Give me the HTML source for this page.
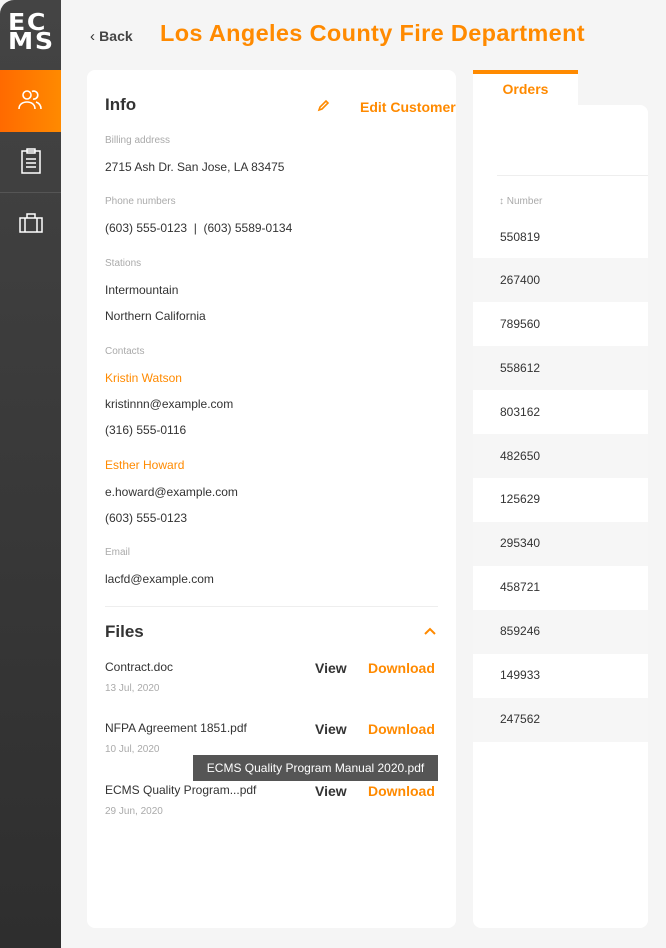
<!DOCTYPE html>
<html><head><style>
*{margin:0;padding:0;box-sizing:border-box}
body{width:666px;height:948px;background:#f5f5f5;font-family:"Liberation Sans",sans-serif;position:relative;overflow:hidden;color:#333}
.a{position:absolute;white-space:nowrap}
.sb{left:0;top:0;width:61px;height:948px;background:linear-gradient(#444,#2e2e2e);border-top-left-radius:14px}
.lab{font-size:10px;color:#aaa;left:105px}
.val{font-size:12px;color:#333;left:105px}
.or{color:#ff8a00}
.row{left:473px;width:175px;height:44px;background:#f6f6f6}
.num{left:500px;font-size:12px;color:#333}
</style></head><body>
<div class="a sb"></div>
<div class="a" style="left:8px;top:14px;color:#fff;font-weight:bold;font-size:23px;line-height:19px;letter-spacing:1.5px;font-family:'DejaVu Sans',sans-serif;transform:scaleX(1.1);transform-origin:left">EC<br>MS</div>
<div class="a" style="left:0;top:70px;width:61px;height:62px;background:linear-gradient(90deg,#ff6a00,#ff8a00)"></div>
<svg class="a" style="left:18px;top:89px" width="25" height="22" viewBox="0 0 25 22" fill="none" stroke="#fff" stroke-width="1.6"><circle cx="9" cy="6" r="4"/><path d="M1 20c0-5 4-7 8-7s8 2 8 7"/><path d="M14 2.5a4 4 0 1 1 1 7.5M18 13c3 1 5 3 5 7"/></svg>
<div class="a" style="left:0;top:192px;width:61px;height:1px;background:#555"></div>
<svg class="a" style="left:21px;top:148px" width="20" height="26" viewBox="0 0 20 26" fill="none" stroke="#fff" stroke-width="1.5"><rect x="1" y="3" width="18" height="22"/><rect x="6" y="1" width="8" height="4"/><path d="M5 11h10M5 15h10M5 19h10"/></svg>
<svg class="a" style="left:19px;top:213px" width="24" height="20" viewBox="0 0 24 20" fill="none" stroke="#fff" stroke-width="1.5"><rect x="1" y="5" width="22" height="14"/><path d="M8 5V1h8v4M6 5v14M18 5v14"/></svg>
<div class="a" style="left:90px;top:28px;font-size:15px;color:#333">&#8249; <span style="font-size:14px;font-weight:bold;color:#444">Back</span></div>
<div class="a or" style="left:160px;top:20px;font-size:23.5px;font-weight:bold;letter-spacing:0.35px">Los Angeles County Fire Department</div>
<div class="a" style="left:87px;top:70px;width:369px;height:858px;background:#fff;border-radius:8px"></div>
<div class="a" style="left:105px;top:95px;font-size:17px;font-weight:bold;color:#333">Info</div>
<svg class="a" style="left:317px;top:99px" width="13" height="13" viewBox="0 0 13 13" fill="none" stroke="#ff8a00" stroke-width="1.6"><path d="M2 11l1-3 6-6 2 2-6 6z"/></svg>
<div class="a or" style="left:360px;top:99px;font-size:14px;font-weight:bold;width:98px;overflow:hidden">Edit Customer</div>
<div class="a lab" style="top:135px">Billing address</div>
<div class="a val" style="top:160px">2715 Ash Dr. San Jose, LA 83475</div>
<div class="a lab" style="top:196px">Phone numbers</div>
<div class="a val" style="top:221px">(603) 555-0123 &nbsp;|&nbsp; (603) 5589-0134</div>
<div class="a lab" style="top:258px">Stations</div>
<div class="a val" style="top:283px">Intermountain</div>
<div class="a val" style="top:309px">Northern California</div>
<div class="a lab" style="top:346px">Contacts</div>
<div class="a val or" style="top:371px">Kristin Watson</div>
<div class="a val" style="top:397px">kristinnn@example.com</div>
<div class="a val" style="top:423px">(316) 555-0116</div>
<div class="a val or" style="top:458px">Esther Howard</div>
<div class="a val" style="top:485px">e.howard@example.com</div>
<div class="a val" style="top:511px">(603) 555-0123</div>
<div class="a lab" style="top:547px">Email</div>
<div class="a val" style="top:572px">lacfd@example.com</div>
<div class="a" style="left:105px;top:606px;width:333px;height:1px;background:#eee"></div>
<div class="a" style="left:105px;top:622px;font-size:17px;font-weight:bold;color:#333">Files</div>
<svg class="a" style="left:424px;top:627px" width="12" height="8" viewBox="0 0 12 8" fill="none" stroke="#ff8a00" stroke-width="2"><path d="M1 7l5-5 5 5"/></svg>
<div class="a val" style="top:660px">Contract.doc</div>
<div class="a lab" style="top:683px">13 Jul, 2020</div>
<div class="a val" style="top:721px">NFPA Agreement 1851.pdf</div>
<div class="a lab" style="top:744px">10 Jul, 2020</div>
<div class="a val" style="top:783px">ECMS Quality Program...pdf</div>
<div class="a lab" style="top:806px">29 Jun, 2020</div>
<div class="a" style="left:315px;top:660px;font-size:14px;font-weight:bold;color:#333">View</div>
<div class="a or" style="left:368px;top:660px;font-size:14px;font-weight:bold">Download</div>
<div class="a" style="left:315px;top:721px;font-size:14px;font-weight:bold;color:#333">View</div>
<div class="a or" style="left:368px;top:721px;font-size:14px;font-weight:bold">Download</div>
<div class="a" style="left:315px;top:783px;font-size:14px;font-weight:bold;color:#333">View</div>
<div class="a or" style="left:368px;top:783px;font-size:14px;font-weight:bold">Download</div>
<div class="a" style="left:193px;top:755px;width:245px;height:26px;background:#555;color:#fff;font-size:12px;line-height:26px;text-align:center">ECMS Quality Program Manual 2020.pdf</div>
<div class="a" style="left:473px;top:70px;width:105px;height:40px;background:#fff;border-top:4px solid #ff8a00"></div>
<div class="a or" style="left:473px;top:81px;width:105px;text-align:center;font-size:14px;font-weight:bold">Orders</div>
<div class="a" style="left:473px;top:105px;width:175px;height:823px;background:#fff;border-radius:0 8px 8px 8px"></div>
<div class="a" style="left:497px;top:175px;width:151px;height:1px;background:#eee"></div>
<div class="a" style="left:499px;top:196px;font-size:10px;color:#aaa">&#8597; Number</div>
<div class="a row" style="top:258px"></div><div class="a row" style="top:346px"></div><div class="a row" style="top:434px"></div><div class="a row" style="top:522px"></div><div class="a row" style="top:610px"></div><div class="a row" style="top:698px"></div>
<div class="a num" style="top:230px">550819</div>
<div class="a num" style="top:273px">267400</div>
<div class="a num" style="top:317px">789560</div>
<div class="a num" style="top:361px">558612</div>
<div class="a num" style="top:405px">803162</div>
<div class="a num" style="top:449px">482650</div>
<div class="a num" style="top:492px">125629</div>
<div class="a num" style="top:536px">295340</div>
<div class="a num" style="top:580px">458721</div>
<div class="a num" style="top:624px">859246</div>
<div class="a num" style="top:668px">149933</div>
<div class="a num" style="top:712px">247562</div>
</body></html>
